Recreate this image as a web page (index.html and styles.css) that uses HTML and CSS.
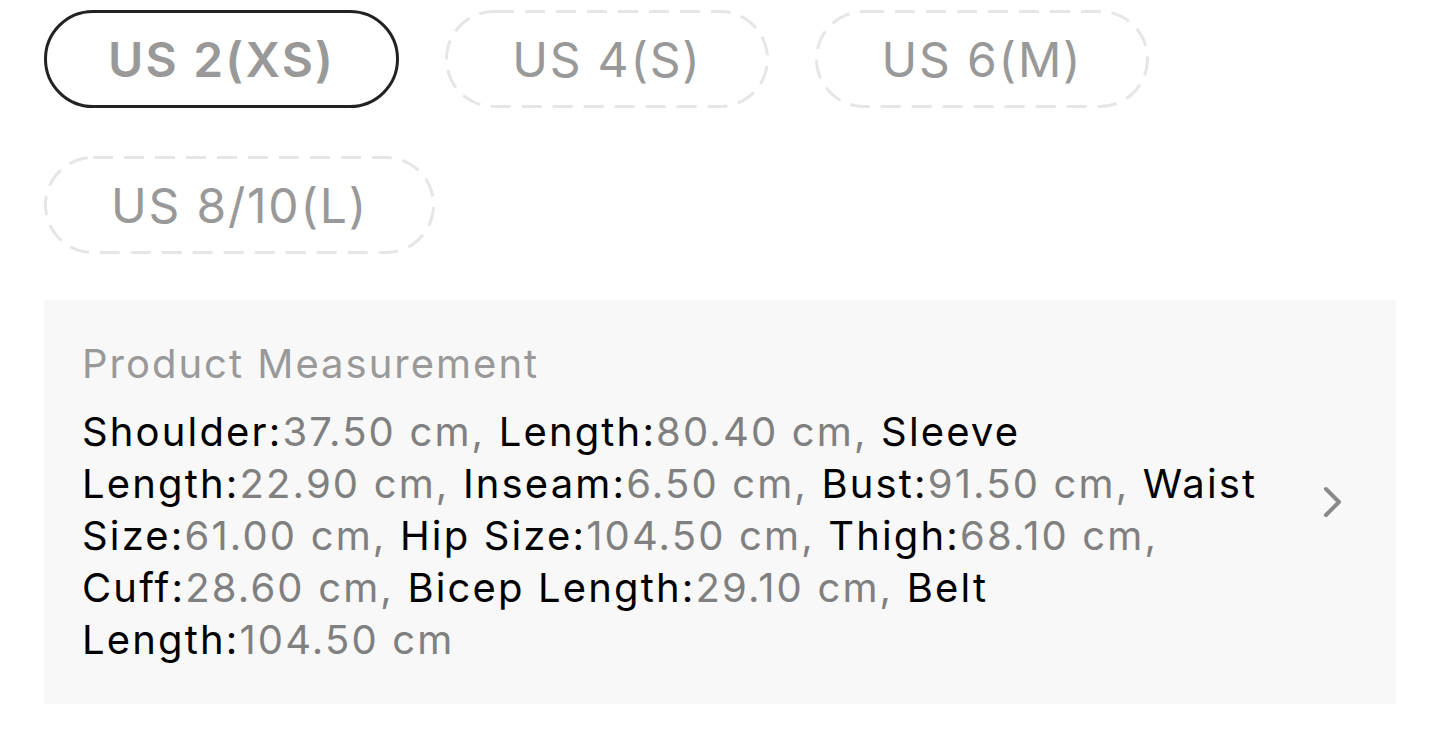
FILE: index.html
```html
<!DOCTYPE html>
<html>
<head>
<meta charset="utf-8">
<link rel="stylesheet" href="styles.css">
</head>
<body>
<div class="page">
  <div class="chips">
    <div class="chip selected">US 2(XS)</div>
    <div class="chip">US 4(S)</div>
    <div class="chip">US 6(M)</div>
    <div class="chip">US 8/10(L)</div>
  </div>
  <div class="measure">
    <div class="measure-text">
      <div class="measure-title">Product Measurement</div>
      <div class="measure-body"><span class="k">Shoulder:</span><span class="v">37.50 cm, </span><span class="k">Length:</span><span class="v">80.40 cm, </span><span class="k">Sleeve Length:</span><span class="v">22.90 cm, </span><span class="k">Inseam:</span><span class="v">6.50 cm, </span><span class="k">Bust:</span><span class="v">91.50 cm, </span><span class="k">Waist Size:</span><span class="v">61.00 cm, </span><span class="k">Hip Size:</span><span class="v">104.50 cm, </span><span class="k">Thigh:</span><span class="v">68.10 cm, </span><span class="k">Cuff:</span><span class="v">28.60 cm, </span><span class="k">Bicep Length:</span><span class="v">29.10 cm, </span><span class="k">Belt Length:</span><span class="v">104.50 cm</span></div>
    </div>
    <svg class="chev" width="24" height="36" viewBox="0 0 24 36"><path d="M4 5 L17 18 L4 31" fill="none" stroke="#8a8a8a" stroke-width="4" stroke-linecap="round" stroke-linejoin="round"/></svg>
  </div>
</div>
</body>
</html>
```
FILE: styles.css
```css
html, body { margin: 0; padding: 0; background: #fff; }
body { font-family: Inter, Roboto, "Liberation Sans", Arial, sans-serif; }
.page { padding: 10px 44px 0 44px; width: 1352px; }
.chips { display: flex; flex-wrap: wrap; column-gap: 46px; row-gap: 48px; width: 1200px; }
.chip {
  box-sizing: border-box;
  height: 98px;
  padding: 0 67px;
  display: flex; align-items: center; justify-content: center;
  font-size: 48px; color: #999;
  letter-spacing: 1.8px;
  border-radius: 49px;
  background-image: url("data:image/svg+xml,%3Csvg xmlns='http://www.w3.org/2000/svg' width='100%25' height='100%25'%3E%3Crect x='0' y='0' width='100%25' height='100%25' rx='49' ry='49' fill='none' stroke='%23e6e6e6' stroke-width='6' stroke-dasharray='20 11'/%3E%3C/svg%3E");
}
.chip.selected {
  background-image: none;
  border: 3px solid #222;
  font-weight: 600;
  letter-spacing: 2.2px;
  padding: 0 61px;
}
.measure {
  margin-top: 46px;
  background: #f8f8f8;
  box-sizing: border-box;
  padding: 38px 50px 38px 38px;
  display: flex; align-items: center;
}
.measure-text { flex: 1; padding-right: 40px; }
.measure-title { font-size: 40px; color: #999; line-height: 52px; margin-bottom: 16px; letter-spacing: 2px; }
.measure-body { font-size: 40px; line-height: 52px; color: #000; letter-spacing: 2.15px; }
.k { color: #000; }
.v { color: #808080; }
.chev { flex: none; }
```
